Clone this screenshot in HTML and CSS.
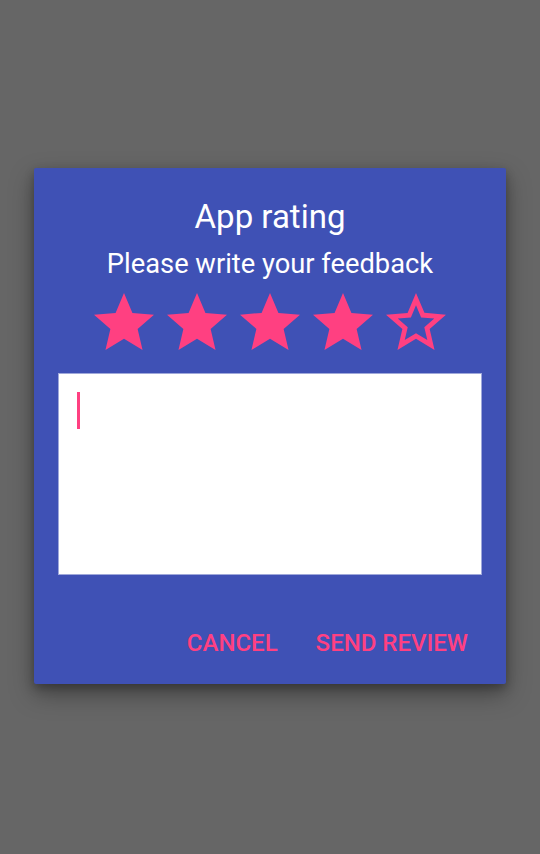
FILE: index.html
```html
<!DOCTYPE html>
<html>
<head>
<meta charset="utf-8">
<link rel="stylesheet" href="styles.css">
</head>
<body>
<div class="screen">
  <div class="dialog">
    <h1 class="title">App rating</h1>
    <p class="subtitle">Please write your feedback</p>
    <div class="stars">
      <svg class="star" viewBox="0 0 24 24"><path d="M12 17.27L18.18 21l-1.64-7.03L22 9.24l-7.19-.61L12 2 9.19 8.63 2 9.24l5.46 4.73L5.82 21z"/></svg>
      <svg class="star" viewBox="0 0 24 24"><path d="M12 17.27L18.18 21l-1.64-7.03L22 9.24l-7.19-.61L12 2 9.19 8.63 2 9.24l5.46 4.73L5.82 21z"/></svg>
      <svg class="star" viewBox="0 0 24 24"><path d="M12 17.27L18.18 21l-1.64-7.03L22 9.24l-7.19-.61L12 2 9.19 8.63 2 9.24l5.46 4.73L5.82 21z"/></svg>
      <svg class="star" viewBox="0 0 24 24"><path d="M12 17.27L18.18 21l-1.64-7.03L22 9.24l-7.19-.61L12 2 9.19 8.63 2 9.24l5.46 4.73L5.82 21z"/></svg>
      <svg class="star" viewBox="0 0 24 24"><path d="M22 9.24l-7.19-.62L12 2 9.19 8.63 2 9.24l5.46 4.73L5.82 21 12 17.270 18.18 21l-1.63-7.03L22 9.24zM12 15.4l-3.76 2.27 1-4.28-3.32-2.880 4.38-.38L12 6.1l1.71 4.04 4.38.38-3.32 2.88 1 4.28L12 15.4z"/></svg>
    </div>
    <div class="field"><span class="caret"></span></div>
    <div class="actions">
      <span class="btn">CANCEL</span>
      <span class="btn">SEND REVIEW</span>
    </div>
  </div>
</div>
</body>
</html>
```
FILE: styles.css
```css
html, body {
  margin: 0;
  padding: 0;
}
body {
  background: #666666;
  font-family: Roboto, "Noto Sans", sans-serif;
}
.screen {
  width: 540px;
  height: 854px;
  box-sizing: border-box;
  padding-bottom: 2px;
  display: flex;
  align-items: center;
  justify-content: center;
}
.dialog {
  width: 472px;
  height: 516px;
  box-sizing: border-box;
  background: #3f51b5;
  border-radius: 2px;
  box-shadow: 0 10px 24px rgba(0,0,0,0.35), 0 4px 10px rgba(0,0,0,0.25);
  padding-top: 30px;
  display: flex;
  flex-direction: column;
  align-items: center;
  color: #ffffff;
}
.title {
  margin: 0;
  font-size: 33px;
  font-weight: 400;
  line-height: 38px;
}
.subtitle {
  margin: 12px 0 0;
  font-size: 27.3px;
  line-height: 32px;
}
.stars {
  margin-top: 7px;
  display: flex;
  gap: 1px;
}
.star {
  width: 72px;
  height: 72px;
  fill: #ff4081;
  display: block;
}
.field {
  margin-top: 14px;
  width: 424px;
  height: 202px;
  box-sizing: border-box;
  background: #ffffff;
  border: 1px solid #9fa8da;
  padding: 18px 0 0 18px;
}
.caret {
  display: block;
  width: 3px;
  height: 37px;
  background: #ff4081;
}
.actions {
  align-self: stretch;
  display: flex;
  justify-content: flex-end;
  gap: 38px;
  padding: 54px 38px 0 0;
}
.btn {
  color: #ff4081;
  font-size: 24px;
  font-weight: 500;
  line-height: 28px;
}
```
